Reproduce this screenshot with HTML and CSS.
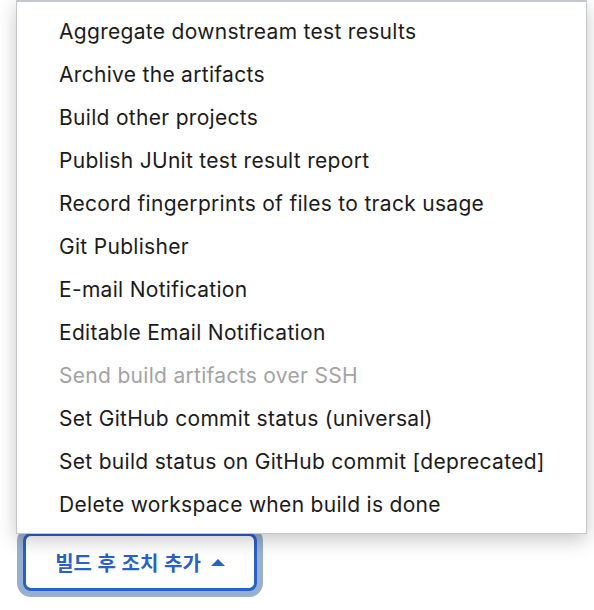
FILE: index.html
```html
<!DOCTYPE html>
<html lang="ko">
<head>
<meta charset="utf-8">
<link rel="stylesheet" href="styles.css">
</head>
<body>
<div class="page">
  <ul class="menu">
    <li class="item">Aggregate downstream test results</li>
    <li class="item">Archive the artifacts</li>
    <li class="item">Build other projects</li>
    <li class="item">Publish JUnit test result report</li>
    <li class="item">Record fingerprints of files to track usage</li>
    <li class="item">Git Publisher</li>
    <li class="item">E-mail Notification</li>
    <li class="item">Editable Email Notification</li>
    <li class="item disabled">Send build artifacts over SSH</li>
    <li class="item">Set GitHub commit status (universal)</li>
    <li class="item">Set build status on GitHub commit [deprecated]</li>
    <li class="item">Delete workspace when build is done</li>
  </ul>
  <button class="add-btn" type="button">빌드 후 조치 추가 <span class="caret"></span></button>
</div>
</body>
</html>
```
FILE: styles.css
```css
html, body {
  margin: 0;
  padding: 0;
  background: #ffffff;
}
.page {
  width: 594px;
  height: 610px;
  overflow: hidden;
  display: flex;
  flex-direction: column;
  align-items: flex-start;
  font-family: "Inter", "Liberation Sans", Arial, sans-serif;
}
.menu {
  position: relative;
  z-index: 2;
  list-style: none;
  margin: 0 0 0 16px;
  padding: 8px 0 7px;
  width: 569px;
  background: #fff;
  border: 1px solid #c4c8cc;
  border-top-width: 2px;
  box-shadow: 0 6px 18px rgba(0, 0, 0, 0.22);
}
.item {
  height: 43px;
  line-height: 43px;
  padding-left: 42px;
  font-size: 21px;
  letter-spacing: 0.3px;
  color: #1b1b1b;
  white-space: nowrap;
}
.item.disabled {
  color: #a3a3a3;
}
.add-btn {
  position: relative;
  z-index: 1;
  margin: -1px 0 0 23px;
  width: 234px;
  height: 58px;
  border: 3px solid #2b5fc9;
  border-radius: 8px;
  background: #fff;
  box-shadow: 0 0 0 6px #98b0cf;
  color: #2b5fc9;
  font-family: "Noto Sans CJK KR", sans-serif;
  font-weight: 700;
  font-size: 20px;
  display: flex;
  align-items: center;
  justify-content: center;
  gap: 10px;
  padding: 0;
}
.caret {
  width: 0;
  height: 0;
  border-left: 7px solid transparent;
  border-right: 7px solid transparent;
  border-bottom: 7px solid #2b5fc9;
}
```
